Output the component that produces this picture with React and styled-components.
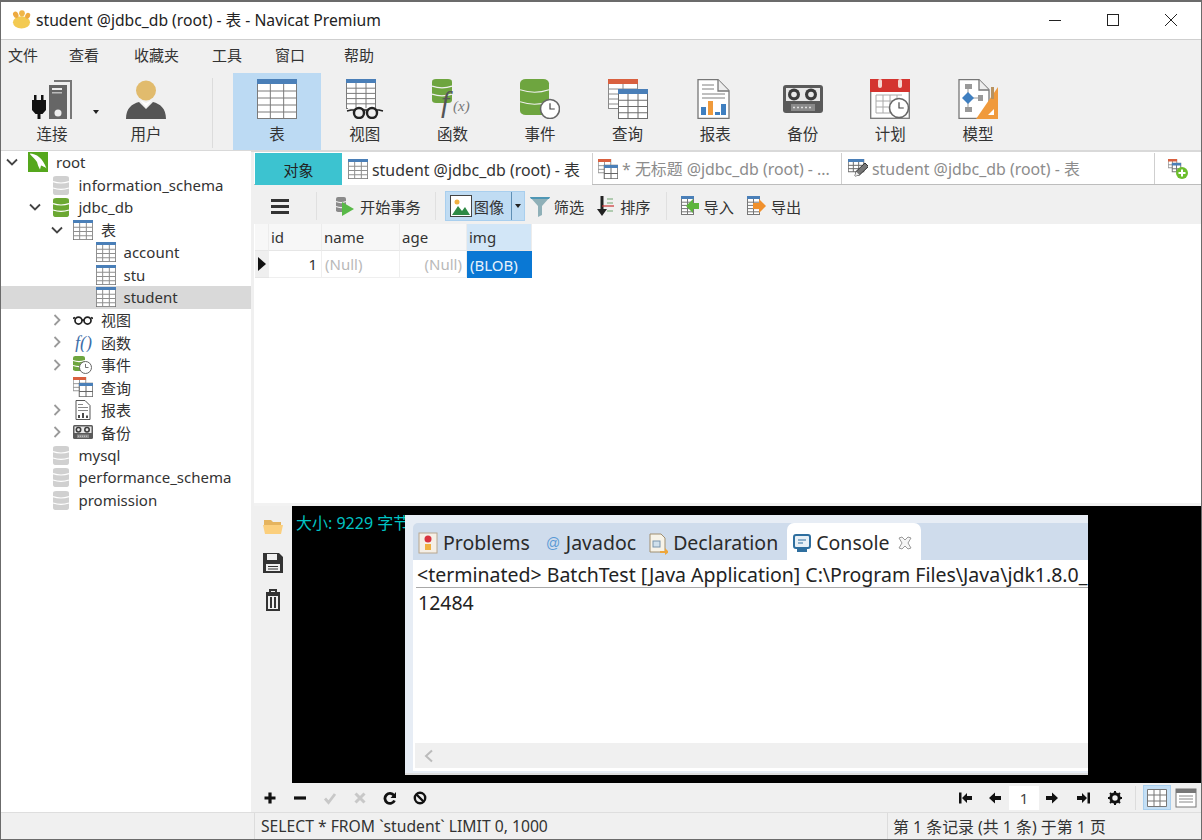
import React from 'react';
import styled, { createGlobalStyle } from 'styled-components';

const Global = createGlobalStyle`
  html, body { margin: 0; padding: 0; background: #f0f0f0; }
  * { box-sizing: border-box; }
`;
const FONT = `"Noto Sans", "Noto Sans CJK SC", sans-serif`;

const Win = styled.div`
  width: 1202px; height: 840px; border: 1px solid #6b6b6b; border-top-width: 2px; overflow: hidden;
  display: flex; flex-direction: column; background: #f0f0f0; font-family: ${FONT}; font-size: 15px; color: #222;
`;
const Title = styled.div`
  height: 38px; background: #fff; border-bottom: 1px solid #cfcfcf; display: flex; align-items: center; padding: 0 1px 2px 11px; flex: none;
`;
const TitleText = styled.span`font-size: 15.7px; margin-left: 5px; color: #222; white-space: nowrap; flex: 1;`;
const WinButtons = styled.div`display: flex; align-items: center;`;
const WinBtn = styled.div`width: 58px; height: 36px; display: flex; align-items: center; justify-content: center;`;
const Menu = styled.div`height: 32px; display: flex; align-items: center; padding: 0 0 3px 7px; flex: none;`;
const MenuItem = styled.div`width: ${p => p.$w}px; font-size: 15px; color: #333;`;
const Toolbar = styled.div`height: 80px; display: flex; padding: 1px 0 0 7px; flex: none; position: relative; border-bottom: 2px solid #d9d9d9;`;
const ToolItem = styled.div`
  width: ${p => p.$w || 87.6}px; margin-left: ${p => p.$ml || 0}px; height: 77px; display: flex; flex-direction: column; align-items: center; flex: none;
  padding-top: 6px; background: ${p => (p.$on ? '#bcdaf3' : 'transparent')};
`;
const ToolLabel = styled.div`font-size: 15.5px; line-height: 20px; margin-top: 5px; color: #333;`;
const ToolSep = styled.div`width: 1px; height: 70px; margin: 5px 0 0 22px; background: #dcdcdc; flex: none;`;
const Caret = styled.div`
  position: absolute; left: 92px; top: 38px; width: 0; height: 0; border-left: 3.5px solid transparent; border-right: 3.5px solid transparent; border-top: 4px solid #222;
`;
const Main = styled.div`flex: 1; display: flex; min-height: 0;`;
const Side = styled.div`width: 250px; background: #fff; margin: -1px 3px 0 0; flex: none; position: relative;`;
const Row = styled.div`
  height: 22.5px; display: flex; align-items: center; white-space: nowrap; font-size: 15px; color: #333;
  padding-left: ${p => 1 + p.$lv * 22.5}px; background: ${p => (p.$sel ? '#d9d9d9' : 'transparent')};
`;
const Chev = styled.div`width: 20px; height: 20px; flex: none; display: flex; align-items: center; justify-content: center;`;
const RowIcon = styled.div`width: 20px; height: 20px; margin: 0 8px 0 6px; flex: none; display: flex;`;
const Right = styled.div`flex: 1; display: flex; flex-direction: column; min-width: 0;`;
const Tabs = styled.div`height: 33px; display: flex; flex: none; padding: 1px 0 0 1px; background: #fff; border-bottom: 1px solid #bdbdbd;`;
const ObjTab = styled.div`width: 87px; background: #3cc3d0; display: flex; align-items: center; justify-content: center; font-size: 15px; color: #222; height: 32px; flex: none;`;
const Tab = styled.div`
  width: ${p => p.$w}px; flex: none; display: flex; align-items: center; gap: 4px; padding-left: 5px; white-space: nowrap; overflow: hidden; height: ${p => (p.$on ? 32 : 31)}px;
  font-size: 15.9px; color: ${p => (p.$on ? '#333' : '#8c8c8c')}; background: #fff; border-right: 1px solid ${p => (p.$on ? '#fff' : '#cfcfcf')};
  border-left: 1px solid ${p => (p.$line ? '#cfcfcf' : '#fff')};
`;
const NewTab = styled.div`flex: 1; display: flex; align-items: center; justify-content: center; height: 31px;`;
const SubBar = styled.div`height: 39px; flex: none; display: flex; align-items: center; background: #f0f0f0; padding-top: 3px;`;
const Burger = styled.div`width: 18px; height: 15px; margin-left: 17px; border-top: 3px solid #333; border-bottom: 3px solid #333; position: relative;
  &::after { content: ''; position: absolute; left: 0; right: 0; top: 3px; height: 3px; background: #333; }`;
const SubSep = styled.div`width: 1px; height: 28px; background: #e0e0e0; margin-left: ${p => p.$ml}px; flex: none;`;
const SubBtn = styled.div`display: flex; align-items: center; gap: ${p => p.$gap ?? 4}px; margin-left: ${p => p.$ml}px; font-size: 15.2px; color: #333; flex: none;`;
const ImgBtn = styled.div`
  width: 80px; height: 30px; margin-left: 9px; background: #c0dcf3; border: 1px solid #a9cfee; display: flex; align-items: center; padding-left: 4px; gap: 2px; font-size: 15.2px; color: #333; flex: none; position: relative;
`;
const ImgSplit = styled.div`
  position: absolute; right: 12px; top: 0; bottom: 0; width: 1px; background: #5f8fb5;
  &::after { content: ''; position: absolute; left: 4px; top: 12px; border-left: 3px solid transparent; border-right: 3px solid transparent; border-top: 4px solid #222; }
`;
const DataArea = styled.div`flex: 1; background: #fff; padding-left: 1px; min-height: 0;`;
const DataGrid = styled.div`display: grid; grid-template-columns: 14px 53px 78px 67px 65px; grid-template-rows: 27px 27px; width: 277px;`;
const Head = styled.div`
  background: ${p => (p.$on ? '#d2e6f7' : '#f7f7f7')}; border-right: 1px solid #ececec; border-bottom: 1px solid #e6e6e6; font-size: 15px; color: #333; padding-left: 2px; display: flex; align-items: center;
`;
const Marker = styled.div`background: #efefef; display: flex; align-items: center; justify-content: center; border-bottom: 1px solid #e6e6e6;`;
const Cell = styled.div`
  display: flex; align-items: center; font-size: 15px; padding: 0 4px 0 3px; border-right: 1px solid #efefef; border-bottom: 1px solid #efefef;
  justify-content: ${p => (p.$r ? 'flex-end' : 'flex-start')}; color: ${p => (p.$null ? '#b9b9b9' : '#333')};
`;
const Blob = styled.div`display: flex; align-items: center; font-size: 15px; padding-left: 3px; background: #0a78d4; color: #e6f2fc;`;
const Splitter = styled.div`height: 3px; background: #f2f2f2; flex: none;`;
const ImgPanel = styled.div`height: 277px; display: flex; flex: none;`;
const ImgStrip = styled.div`width: 38px; background: #f0f0f0; display: flex; flex-direction: column; align-items: center; padding-top: 11px; gap: 14.5px; flex: none;`;
const Black = styled.div`flex: 1; background: #000; position: relative; padding: 7px 0 0 4px; color: #00c4c4; font-size: 16px; line-height: 20px; white-space: nowrap;`;
const Eclipse = styled.div`
  position: absolute; left: 113px; top: 9px; width: 683px; height: 260px; background: #e7edf5; padding: 8px 0 2px 8px; display: flex; flex-direction: column; font-size: 19.5px; color: #222; overflow: hidden; border-bottom: 2px solid #dedede;
`;
const EcTabs = styled.div`height: 37px; background: #cfdcec; border-radius: 5px 0 0 0; display: flex; align-items: center; flex: none; padding-left: 5px;`;
const EcTab = styled.div`
  display: flex; align-items: center; gap: 5px; height: 37px; flex: none; margin-left: ${p => p.$ml || 0}px; white-space: nowrap; color: #2a2a2a; padding-top: 2px;
  padding-left: ${p => (p.$on ? 6 : 0)}px; padding-right: ${p => (p.$on ? 8 : 0)}px; background: ${p => (p.$on ? '#fff' : 'transparent')}; border-radius: ${p => (p.$on ? '7px 7px 0 0' : '0')};
`;
const EcBody = styled.div`flex: 1; background: #fff; display: flex; flex-direction: column; min-height: 0;`;
const EcLine = styled.div`height: 28px; line-height: 30px; padding-left: 1px; margin-left: 3px; border-bottom: 1px solid #a8a8a8; white-space: nowrap; flex: none;`;
const EcOut = styled.div`flex: 1; padding-left: 5px; line-height: 30px;`;
const EcScroll = styled.div`height: 25px; margin: 0 0 3px 2px; background: #f0f0f0; display: flex; align-items: center; padding-left: 9px; flex: none;`;
const Bottom = styled.div`height: 29px; flex: none; display: flex; align-items: center; background: #f0f0f0;`;
const BotLeft = styled.div`flex: 1; display: flex; align-items: center; padding-left: 9px; gap: 16px;`;
const BotRight = styled.div`display: flex; align-items: center; padding-right: 1px;`;
const BotBtn = styled.div`width: ${p => p.$w || 14}px; height: 14px; margin-left: ${p => p.$ml || 0}px; display: flex; align-items: center; justify-content: center; flex: none;`;
const PageNum = styled.div`width: 30px; height: 24px; background: #fff; font-size: 15px; display: flex; align-items: center; justify-content: center; margin-left: 7px; color: #444;`;
const BotSep = styled.div`width: 1px; height: 24px; background: #dcdcdc; margin-left: 13px;`;
const ViewBtn = styled.div`
  width: 28px; height: 25px; margin-left: ${p => p.$ml}px; display: flex; align-items: center; justify-content: center;
  background: ${p => (p.$on ? '#c4dff5' : 'transparent')}; border: 1px solid ${p => (p.$on ? '#a9cfee' : 'transparent')};
`;
const Status = styled.div`height: 27px; flex: none; display: flex; background: #f0f0f0; border-top: 1px solid #dedede; padding-left: 253px; font-size: 15.7px; color: #333; align-items: stretch; position: relative;`;
const StatusL = styled.div`width: 633px; display: flex; align-items: center; padding-left: 6px; border-left: 1px solid #dcdcdc; white-space: nowrap;`;
const StatusR = styled.div`flex: 1; display: flex; align-items: center; padding-left: 5px; border-left: 1px solid #dcdcdc; white-space: nowrap; font-size: 15.9px;`;

/* ---------- drawing helpers ---------- */
const GridDraw = ({ x, y, w, h, cols, rows, head = '#4a7fb8', line = '#7b7b7b', hh = 4, sw = 1, inner }) => {
  const v = Array.from({ length: cols - 1 }, (_, i) => x + (w * (i + 1)) / cols);
  const r = Array.from({ length: rows - 1 }, (_, i) => y + hh + ((h - hh) * (i + 1)) / rows);
  return (
    <g>
      <rect x={x + 0.5} y={y + 0.5} width={w - 1} height={h - 1} fill="#fff" stroke={line} strokeWidth={sw} />
      {v.map(a => <line key={a} x1={a} x2={a} y1={y} y2={y + h} stroke={inner || line} strokeWidth={sw} />)}
      {r.map(a => <line key={a} x1={x} x2={x + w} y1={a} y2={a} stroke={inner || line} strokeWidth={sw} />)}
      <rect x={x} y={y} width={w} height={hh} fill={head} />
    </g>
  );
};
const DbDraw = ({ x, y, w, h, color, n = 3, sw = 1.2, gap = '#f0f0f0' }) => {
  const s = h / n;
  const bow = h * 0.07;
  return (
    <g>
      <rect x={x} y={y} width={w} height={h} rx={w * 0.2} ry={h * 0.12} fill={color} />
      {Array.from({ length: n - 1 }, (_, i) => {
        const ly = y + (i + 1) * s - bow / 2;
        return <path key={i} d={`M${x} ${ly}Q${x + w / 2} ${ly + bow * 2} ${x + w} ${ly}`} fill="none" stroke={gap} strokeWidth={sw} />;
      })}
    </g>
  );
};
const ClockDraw = ({ cx, cy, r }) => (
  <g>
    <circle cx={cx} cy={cy} r={r} fill="#fff" stroke="#666" strokeWidth={Math.max(1, r / 6)} />
    <path d={`M${cx} ${cy - r * 0.6}V${cy}H${cx + r * 0.5}`} fill="none" stroke="#444" strokeWidth={Math.max(1, r / 8)} />
  </g>
);
const Svg = ({ s = 40, w, h, children, vb }) => (
  <svg width={w || s} height={h || s} viewBox={vb || `0 0 ${w || s} ${h || s}`} style={{ flex: 'none', display: 'block' }}>{children}</svg>
);
const Scaled = ({ s, children }) => <svg width={s} height={s} viewBox="0 0 40 40" style={{ flex: 'none', display: 'block' }}>{children}</svg>;

const gTable = <GridDraw x={0} y={0} w={40} h={40} cols={3} rows={5} hh={5} />;
const gView = (
  <g>
    <GridDraw x={1} y={0} w={30} h={30} cols={3} rows={5} hh={4} />
    <rect x={3} y={29} width={36} height={10} fill="#f0f0f0" />
    <path d="M2 32l4-1h28l4 1" fill="none" stroke="#222" strokeWidth="1.6" />
    <circle cx="14" cy="34" r="5" fill="#f0f0f0" stroke="#222" strokeWidth="2.4" />
    <circle cx="27" cy="34" r="5" fill="#f0f0f0" stroke="#222" strokeWidth="2.4" />
  </g>
);
const gFunc = (
  <g>
    <DbDraw x={0} y={0} w={20} h={24} color="#6ea53f" />
    <text x="9" y="33" fontFamily="Liberation Serif, serif" fontStyle="italic" fontSize="30" fill="#555">f</text>
    <text x="21" y="32" fontFamily="Liberation Serif, serif" fontStyle="italic" fontSize="15" fill="#777">(x)</text>
  </g>
);
const gEvent = (
  <g>
    <DbDraw x={0} y={0} w={29} h={36} color="#6ea53f" />
    <ClockDraw cx={30} cy={30} r={9.5} />
  </g>
);
const gQuery = (
  <g>
    <GridDraw x={0} y={0} w={30} h={30} cols={2} rows={5} head="#d9603f" line="#8a8a8a" hh={5} />
    <GridDraw x={10} y={10} w={30} h={30} cols={3} rows={4} line="#6d6d6d" hh={5} />
  </g>
);
const gReport = (
  <g>
    <path d="M3 .7h20l11 11V39.3H3z" fill="#fff" stroke="#777" strokeWidth="1.3" />
    <path d="M23 .7V12h11" fill="#eee" stroke="#777" strokeWidth="1.3" />
    <path d="M7 6h12M7 10h12M7 15h23M7 19h23" stroke="#aaa" strokeWidth="1.4" />
    <rect x="6" y="28" width="5" height="8" fill="#3f7fc0" />
    <rect x="13" y="22" width="5" height="14" fill="#ef9a3b" />
    <rect x="20" y="33" width="5" height="3" fill="#3f7fc0" />
    <rect x="26" y="25" width="5" height="11" fill="#3f7fc0" />
  </g>
);
const gBackup = (
  <g>
    <rect x="0" y="6" width="40" height="28" rx="3" fill="#5a5a5a" />
    <rect x="3" y="9" width="34" height="13" fill="#e8e8e8" />
    <circle cx="11" cy="15.500" r="6" fill="#3c3c3c" /><circle cx="11" cy="15.500" r="2.800" fill="#e8e8e8" />
    <circle cx="28" cy="15.500" r="6" fill="#3c3c3c" /><circle cx="28" cy="15.500" r="2.800" fill="#e8e8e8" />
    <rect x="8" y="25" width="24" height="7" fill="#8a8a8a" />
    <path d="M10 28.500h20" stroke="#ddd" strokeWidth="1.6" strokeDasharray="2 2" />
  </g>
);
const gPlan = (
  <g>
    <rect x=".7" y="5" width="38.6" height="34.3" fill="#fff" stroke="#777" strokeWidth="1.3" />
    <rect x="0" y="0" width="40" height="13" fill="#d4342f" />
    <rect x="8" y="0" width="4" height="9" rx="2" fill="#f4d6d0" />
    <rect x="28" y="0" width="4" height="9" rx="2" fill="#f4d6d0" />
    <path d="M6 16h26M6 22h26M6 28h26M6 34h26M6 16v18M13 16v18M20 16v18M27 16v18" stroke="#aaa" fill="none" />
    <ClockDraw cx={29} cy={29} r={9.5} />
  </g>
);
const gModel = (
  <g>
    <path d="M1 .7h20l10 10V39.3H1z" fill="#fff" stroke="#777" strokeWidth="1.3" />
    <path d="M21 .7V11h10" fill="#eee" stroke="#777" strokeWidth="1.3" />
    <path d="M10 8v20M10 19h12" stroke="#999" />
    <rect x="7" y="5" width="7" height="5" fill="#999" />
    <rect x="7" y="28" width="7" height="5" fill="#999" />
    <rect x="20" y="16" width="5" height="6" fill="#999" />
    <path d="M10 13l6 6-6 6-6-6z" fill="#3f7fc0" />
    <path d="M40 8v32H18z" fill="#f09a3c" />
    <path d="M33 8h3v12h-3z" fill="#b8925f" />
    <path d="M36 30v6h-6z" fill="#fff" />
  </g>
);
const gConn = (
  <g>
    <rect x="17" y="6" width="18" height="34" fill="#666" />
    <path d="M22 2h17v38" fill="none" stroke="#777" strokeWidth="2" />
    <rect x="20" y="9" width="10" height="2" fill="#eee" />
    <rect x="20" y="13" width="10" height="1.5" fill="#bbb" />
    <circle cx="26" cy="34" r="3.5" fill="#eee" />
    <rect x="2" y="16" width="2.5" height="6" fill="#111" />
    <rect x="9" y="16" width="2.5" height="6" fill="#111" />
    <path d="M0 21h14v10l-3.5 4H8.5v5H5.5v-5H3.500L0 31z" fill="#111" />
  </g>
);
const gUser = (
  <g>
    <circle cx="20" cy="11.500" r="10" fill="#e1bb6d" />
    <path d="M0 40c0-11 6-15 13-17l7 7 7-7c7 2 13 6 13 17z" fill="#555" />
    <path d="M14 21l6 7 6-7-6 3z" fill="#fff" />
  </g>
);
const gDolphin = (
  <g>
    <rect width="40" height="40" fill="#55a71d" />
    <path d="M3 3c14 0 27 10 34 30-4-4-7-4-11-6l-2 8c-3-5-5-10-6-15C14 14 8 9 3 3z" fill="#fff" />
    <path d="M0 40V0h4v34z" fill="#55a71d" />
  </g>
);
const gF = <text x="4" y="33" fontFamily="Liberation Serif, serif" fontStyle="italic" fontSize="36" fill="#3c6ea8">f()</text>;
const gSmView = (
  <g fill="none" stroke="#222" strokeWidth="3.5">
    <circle cx="11" cy="21" r="7" /><circle cx="29" cy="21" r="7" /><path d="M0 17l4-2M40 17l-4-2M18 20h4" />
  </g>
);
const gSmEvent = (
  <g>
    <DbDraw x={0} y={2} w={24} h={30} color="#6ea53f" sw={2.4} gap="#fff" />
    <ClockDraw cx={25} cy={25} r={12} />
  </g>
);
const gSmQuery = (
  <g>
    <GridDraw x={0} y={0} w={26} h={28} cols={2} rows={3} head="#d9603f" line="#999" hh={6} sw={2} />
    <GridDraw x={12} y={12} w={28} h={28} cols={2} rows={2} line="#666" hh={6} sw={2} />
  </g>
);
const gSmReport = (
  <g>
    <path d="M6 1h18l10 10v28H6z" fill="#fff" stroke="#555" strokeWidth="2" />
    <path d="M10 9h10M10 15h20M10 21h20" stroke="#888" strokeWidth="2" />
    <path d="M12 36v-6M20 36v-10M28 36v-5" stroke="#333" strokeWidth="3.500" />
  </g>
);
const gTabEdit = (
  <g>
    <GridDraw x={0} y={0} w={32} h={26} cols={3} rows={3} hh={6} line="#6d6d6d" sw={2} />
    <path d="M14 34l2-9 18-17 7 7-18 17z" fill="#777" stroke="#333" strokeWidth="2" />
    <path d="M14 34l2-9 7 7z" fill="#eee" />
  </g>
);
const gAdd = (
  <g>
    <GridDraw x={0} y={0} w={18} h={18} cols={2} rows={2} head="#d9603f" line="#999" hh={5} sw={2} />
    <GridDraw x={8} y={8} w={18} h={18} cols={2} rows={2} line="#777" hh={5} sw={2} />
    <circle cx="28" cy="28" r="12" fill="#6cbe2c" />
    <path d="M28 21v14M21 28h14" stroke="#fff" strokeWidth="4" />
  </g>
);
const gPaw = (
  <g>
    <ellipse cx="20" cy="26" rx="18" ry="13" fill="#f3ca52" />
    <ellipse cx="8" cy="10" rx="5.500" ry="7" transform="rotate(-25 8 10)" fill="#eda93f" />
    <ellipse cx="21" cy="7" rx="6" ry="6.500" fill="#f0b648" />
    <ellipse cx="33" cy="12" rx="5" ry="6.500" transform="rotate(25 33 12)" fill="#eda93f" />
  </g>
);

const Chevron = ({ open }) => (
  <svg width="14" height="14" viewBox="0 0 14 14">
    {open
      ? <path d="M2 4.500l5 5 5-5" fill="none" stroke="#444" strokeWidth="1.800" />
      : <path d="M4.500 2l5 5-5 5" fill="none" stroke="#9a9a9a" strokeWidth="1.800" />}
  </svg>
);
const I = ({ s = 20, children }) => <Scaled s={s}>{children}</Scaled>;
const smDb = c => <DbDraw x={4} y={2} w={32} h={38} color={c} sw={2.4} gap="#fff" />;
const smTable = <GridDraw x={0} y={0} w={40} h={40} cols={3} rows={4} hh={6} line="#6d6d6d" sw={2} inner="#8f8f8f" />;

const tree = [
  { lv: 0, ch: 'o', ic: gDolphin, t: 'root' },
  { lv: 1, ic: smDb('#d0d0d0'), t: 'information_schema' },
  { lv: 1, ch: 'o', ic: smDb('#6ba832'), t: 'jdbc_db' },
  { lv: 2, ch: 'o', ic: smTable, t: '表' },
  { lv: 3, ic: smTable, t: 'account' },
  { lv: 3, ic: smTable, t: 'stu' },
  { lv: 3, ic: smTable, t: 'student', sel: true },
  { lv: 2, ch: 'c', ic: gSmView, t: '视图' },
  { lv: 2, ch: 'c', ic: gF, t: '函数' },
  { lv: 2, ch: 'c', ic: gSmEvent, t: '事件' },
  { lv: 2, ic: gSmQuery, t: '查询' },
  { lv: 2, ch: 'c', ic: gSmReport, t: '报表' },
  { lv: 2, ch: 'c', ic: gBackup, t: '备份' },
  { lv: 1, ic: smDb('#d0d0d0'), t: 'mysql' },
  { lv: 1, ic: smDb('#d0d0d0'), t: 'performance_schema' },
  { lv: 1, ic: smDb('#d0d0d0'), t: 'promission' },
];

const tools = [
  ['视图', gView], ['函数', gFunc], ['事件', gEvent], ['查询', gQuery],
  ['报表', gReport], ['备份', gBackup], ['计划', gPlan], ['模型', gModel],
];
const menu = [['文件', 61], ['查看', 65], ['收藏夹', 78], ['工具', 63], ['窗口', 69], ['帮助', 40]];

export default function App() {
  return (
    <Win>
      <Global />
      <Title>
        <I s={19}>{gPaw}</I>
        <TitleText>student @jdbc_db (root) - 表 - Navicat Premium</TitleText>
        <WinButtons>
          <WinBtn><Svg s={14}><path d="M1 7.500h12" stroke="#222" /></Svg></WinBtn>
          <WinBtn><Svg s={14}><rect x="1.500" y="1.500" width="11" height="11" fill="none" stroke="#222" /></Svg></WinBtn>
          <WinBtn><Svg s={14}><path d="M1 1l12 12M13 1L1 13" stroke="#222" /></Svg></WinBtn>
        </WinButtons>
      </Title>
      <Menu>{menu.map(([m, w]) => <MenuItem key={m} $w={w}>{m}</MenuItem>)}</Menu>
      <Toolbar>
        <ToolItem $w={88}><I s={40}>{gConn}</I><ToolLabel>连接</ToolLabel></ToolItem>
        <Caret />
        <ToolItem $w={88} $ml={6}><I s={40}>{gUser}</I><ToolLabel>用户</ToolLabel></ToolItem>
        <ToolSep />
        <ToolItem $ml={20} $on $w={88}><I s={40}>{gTable}</I><ToolLabel>表</ToolLabel></ToolItem>
        {tools.map(([t, ic]) => (
          <ToolItem key={t}><I s={40}>{ic}</I><ToolLabel>{t}</ToolLabel></ToolItem>
        ))}
      </Toolbar>
      <Main>
        <Side>
          {tree.map(r => (
            <Row key={r.t + r.lv} $lv={r.lv} $sel={r.sel}>
              <Chev>{r.ch && <Chevron open={r.ch === 'o'} />}</Chev>
              <RowIcon><I>{r.ic}</I></RowIcon>
              {r.t}
            </Row>
          ))}
        </Side>
        <Right>
          <Tabs>
            <ObjTab>对象</ObjTab>
            <Tab $w={250} $on><I>{smTable}</I>student @jdbc_db (root) - 表</Tab>
            <Tab $w={250} $line><I>{gSmQuery}</I>* 无标题 @jdbc_db (root) - ...</Tab>
            <Tab $w={313}><I>{gTabEdit}</I>student @jdbc_db (root) - 表</Tab>
            <NewTab><I>{gAdd}</I></NewTab>
          </Tabs>
          <SubBar>
            <Burger />
            <SubSep $ml={27} />
            <SubBtn $ml={18} $gap={5}>
              <Svg s={20}><DbDraw x={1} y={1} w={10} h={15} color="#8a8a8a" /><path d="M7 6l12 7-12 7z" fill="#58b947" /></Svg>开始事务
            </SubBtn>
            <SubSep $ml={14} />
            <ImgBtn>
              <Svg w={22} h={22}>
                <rect x=".5" y=".5" width="21" height="21" fill="#fff" stroke="#444" />
                <circle cx="7" cy="7" r="2.500" fill="#f0b040" />
                <path d="M2 20l6-9 4 5 3-4 5 8z" fill="#2f8a45" />
              </Svg>图像<ImgSplit />
            </ImgBtn>
            <SubBtn $ml={4} $gap={3}>
              <Svg w={22} h={22}><path d="M1 2h20l-8 9v9l-4 2V11z" fill="#8fb0b8" /><path d="M1 2h20l-1 2H2z" fill="#4f97b5" /></Svg>筛选
            </SubBtn>
            <SubBtn $ml={12} $gap={6}>
              <Svg w={18} h={22}>
                <path d="M6 1v15" stroke="#222" strokeWidth="3" /><path d="M1 14h10l-5 7z" fill="#222" />
                <path d="M11 4h6M11 8h6M11 16h6" stroke="#9bbf9b" strokeWidth="1.500" /><path d="M6 11h12" stroke="#c33" strokeWidth="1.200" />
              </Svg>排序
            </SubBtn>
            <SubSep $ml={15} />
            <SubBtn $ml={13} $gap={4}>
              <Svg w={20} h={22}><GridDraw x={1} y={1} w={13} h={19} cols={2} rows={5} hh={3} line="#777" /><path d="M19 8h-6V4l-7 7 7 7v-4h6z" fill="#5db53c" /></Svg>导入
            </SubBtn>
            <SubBtn $ml={12} $gap={3}>
              <Svg w={22} h={22}><GridDraw x={1} y={1} w={13} h={19} cols={2} rows={5} hh={3} line="#777" /><path d="M7 8h6V4l7 7-7 7v-4H7z" fill="#f0902c" /></Svg>导出
            </SubBtn>
          </SubBar>
          <DataArea>
            <DataGrid>
              <Head />
              <Head>id</Head>
              <Head>name</Head>
              <Head>age</Head>
              <Head $on>img</Head>
              <Marker><Svg w={8} h={14}><path d="M0 0l8 7-8 7z" fill="#111" /></Svg></Marker>
              <Cell $r>1</Cell>
              <Cell $null>(Null)</Cell>
              <Cell $null $r>(Null)</Cell>
              <Blob>(BLOB)</Blob>
            </DataGrid>
          </DataArea>
          <Splitter />
          <ImgPanel>
            <ImgStrip>
              <Svg w={20} h={18}>
                <path d="M1 3h7l2 2h8v3H1z" fill="#e5b45f" /><path d="M0 8h20l-2 9H2z" fill="#fbcf7d" />
              </Svg>
              <Svg w={20} h={24}>
                <path d="M0 3h16l4 4v16H0z" fill="#333" />
                <rect x="4" y="4" width="10" height="6" fill="#f0f0f0" />
                <rect x="3" y="14" width="14" height="7" fill="#f0f0f0" />
                <path d="M5 16.500h10M5 19h10" stroke="#333" />
              </Svg>
              <Svg w={20} h={24}>
                <path d="M3 5h14M7 5V2h6v3" fill="none" stroke="#333" strokeWidth="2" />
                <path d="M4 7h12v15H4z" fill="none" stroke="#333" strokeWidth="2" />
                <path d="M8 9v11M12 9v11" stroke="#333" strokeWidth="2" />
              </Svg>
            </ImgStrip>
            <Black>
              大小: 9229 字节
              <Eclipse>
                <EcTabs>
                  <EcTab>
                    <Svg w={20} h={24}>
                      <rect x="1" y="2" width="18" height="20" fill="#f5efe6" stroke="#b8a68e" />
                      <circle cx="10" cy="8" r="3.500" fill="#d9333f" /><rect x="7" y="13" width="6" height="6" fill="#f0b040" />
                    </Svg>Problems
                  </EcTab>
                  <EcTab $ml={15}><Svg w={16} h={20}><text x="1" y="15" fontSize="14" fontFamily="Liberation Sans, sans-serif" fill="#5a9ad5">@</text></Svg>Javadoc</EcTab>
                  <EcTab $ml={12}>
                    <Svg w={20} h={24}>
                      <path d="M2 3h11l4 4v14H2z" fill="#f7f3e8" stroke="#a08f70" />
                      <rect x="5" y="10" width="7" height="6" fill="#cfe0ec" stroke="#7a96ad" />
                      <path d="M12 20h5v-3l4 4-4 3v-2h-5z" fill="#eda63c" />
                    </Svg>Declaration
                  </EcTab>
                  <EcTab $on $ml={9}>
                    <Svg w={18} h={22}>
                      <rect x="1" y="3" width="16" height="13" rx="2" fill="#e8f0f6" stroke="#2f6f9f" strokeWidth="2" />
                      <path d="M5 8h8M5 11h5" stroke="#2f6f9f" /><rect x="4" y="17" width="10" height="3" fill="#2f6f9f" />
                    </Svg>Console
                    <Svg w={18} h={16} vb="-2 0 18 16"><path d="M2 3l3-1 3 3 3-3 3 1-3 5 3 5-3 1-3-3-3 3-3-1 3-5z" fill="#f5f5f5" stroke="#999" /></Svg>
                  </EcTab>
                </EcTabs>
                <EcBody>
                  <EcLine>&lt;terminated&gt; BatchTest [Java Application] C:\Program Files\Java\jdk1.8.0_</EcLine>
                  <EcOut>12484</EcOut>
                  <EcScroll><Svg w={10} h={14}><path d="M8 1.500L2 7l6 5.500" fill="none" stroke="#bbb" strokeWidth="2" /></Svg></EcScroll>
                </EcBody>
              </Eclipse>
            </Black>
          </ImgPanel>
          <Bottom>
            <BotLeft>
              <BotBtn><Svg s={14}><path d="M7 1.500v11M1.500 7h11" stroke="#111" strokeWidth="3.200" /></Svg></BotBtn>
              <BotBtn><Svg s={14}><path d="M1 7h12" stroke="#111" strokeWidth="3.200" /></Svg></BotBtn>
              <BotBtn><Svg s={14}><path d="M2 7.500l3.500 4L12 3" fill="none" stroke="#c8c8c8" strokeWidth="2.800" /></Svg></BotBtn>
              <BotBtn><Svg s={14}><path d="M2.500 2.500l9 9M11.500 2.500l-9 9" stroke="#c8c8c8" strokeWidth="3" /></Svg></BotBtn>
              <BotBtn><Svg s={14}><path d="M11 4.500A5 5 0 1 0 11.500 9.500" fill="none" stroke="#111" strokeWidth="2.800" /><path d="M13 1v6H7.500z" fill="#111" /></Svg></BotBtn>
              <BotBtn><Svg s={14}><circle cx="7" cy="7" r="5.200" fill="none" stroke="#111" strokeWidth="2.400" /><path d="M3.500 3.500l7 7" stroke="#111" strokeWidth="2.400" /></Svg></BotBtn>
            </BotLeft>
            <BotRight>
              <BotBtn><Svg s={14}><path d="M1 1.500h2.500v11H1zM4 7l5-5v3h5v4H9v3z" fill="#111" /></Svg></BotBtn>
              <BotBtn $ml={16}><Svg s={14}><path d="M1 7l6-5.500V5h6v4H7v3.500z" fill="#111" /></Svg></BotBtn>
              <PageNum>1</PageNum>
              <BotBtn $ml={6}><Svg s={14}><path d="M13 7L7 1.500V5H1v4h6v3.500z" fill="#111" /></Svg></BotBtn>
              <BotBtn $ml={18}><Svg s={14}><path d="M13 1.500h-2.500v11H13zM10 7L5 2v3H0v4h5v3z" fill="#111" /></Svg></BotBtn>
              <BotBtn $ml={17}><Svg s={14}><circle cx="7" cy="7" r="4.200" fill="none" stroke="#111" strokeWidth="3" /><path d="M7 0v3M7 11v3M0 7h3M11 7h3M2 2l2 2M10 10l2 2M12 2l-2 2M4 10l-2 2" stroke="#111" strokeWidth="2" /></Svg></BotBtn>
              <BotSep />
              <ViewBtn $on $ml={7}><Svg w={22} h={20}><path d="M1.500 1.500h19v17h-19zM8 1.500v17M14 1.500v17M1.500 7h19M1.500 13h19" fill="#fff" stroke="#777" /></Svg></ViewBtn>
              <ViewBtn $ml={1}><Svg w={22} h={20}><rect x="1" y="1" width="20" height="18" fill="#fff" stroke="#777" /><rect x="1" y="1" width="20" height="4" fill="#777" /><path d="M4 8h14M4 11h14M4 14h14" stroke="#888" /></Svg></ViewBtn>
            </BotRight>
          </Bottom>
        </Right>
      </Main>
      <Status>
        <StatusL>SELECT * FROM `student` LIMIT 0, 1000</StatusL>
        <StatusR>第 1 条记录 (共 1 条) 于第 1 页</StatusR>
      </Status>
    </Win>
  );
}
